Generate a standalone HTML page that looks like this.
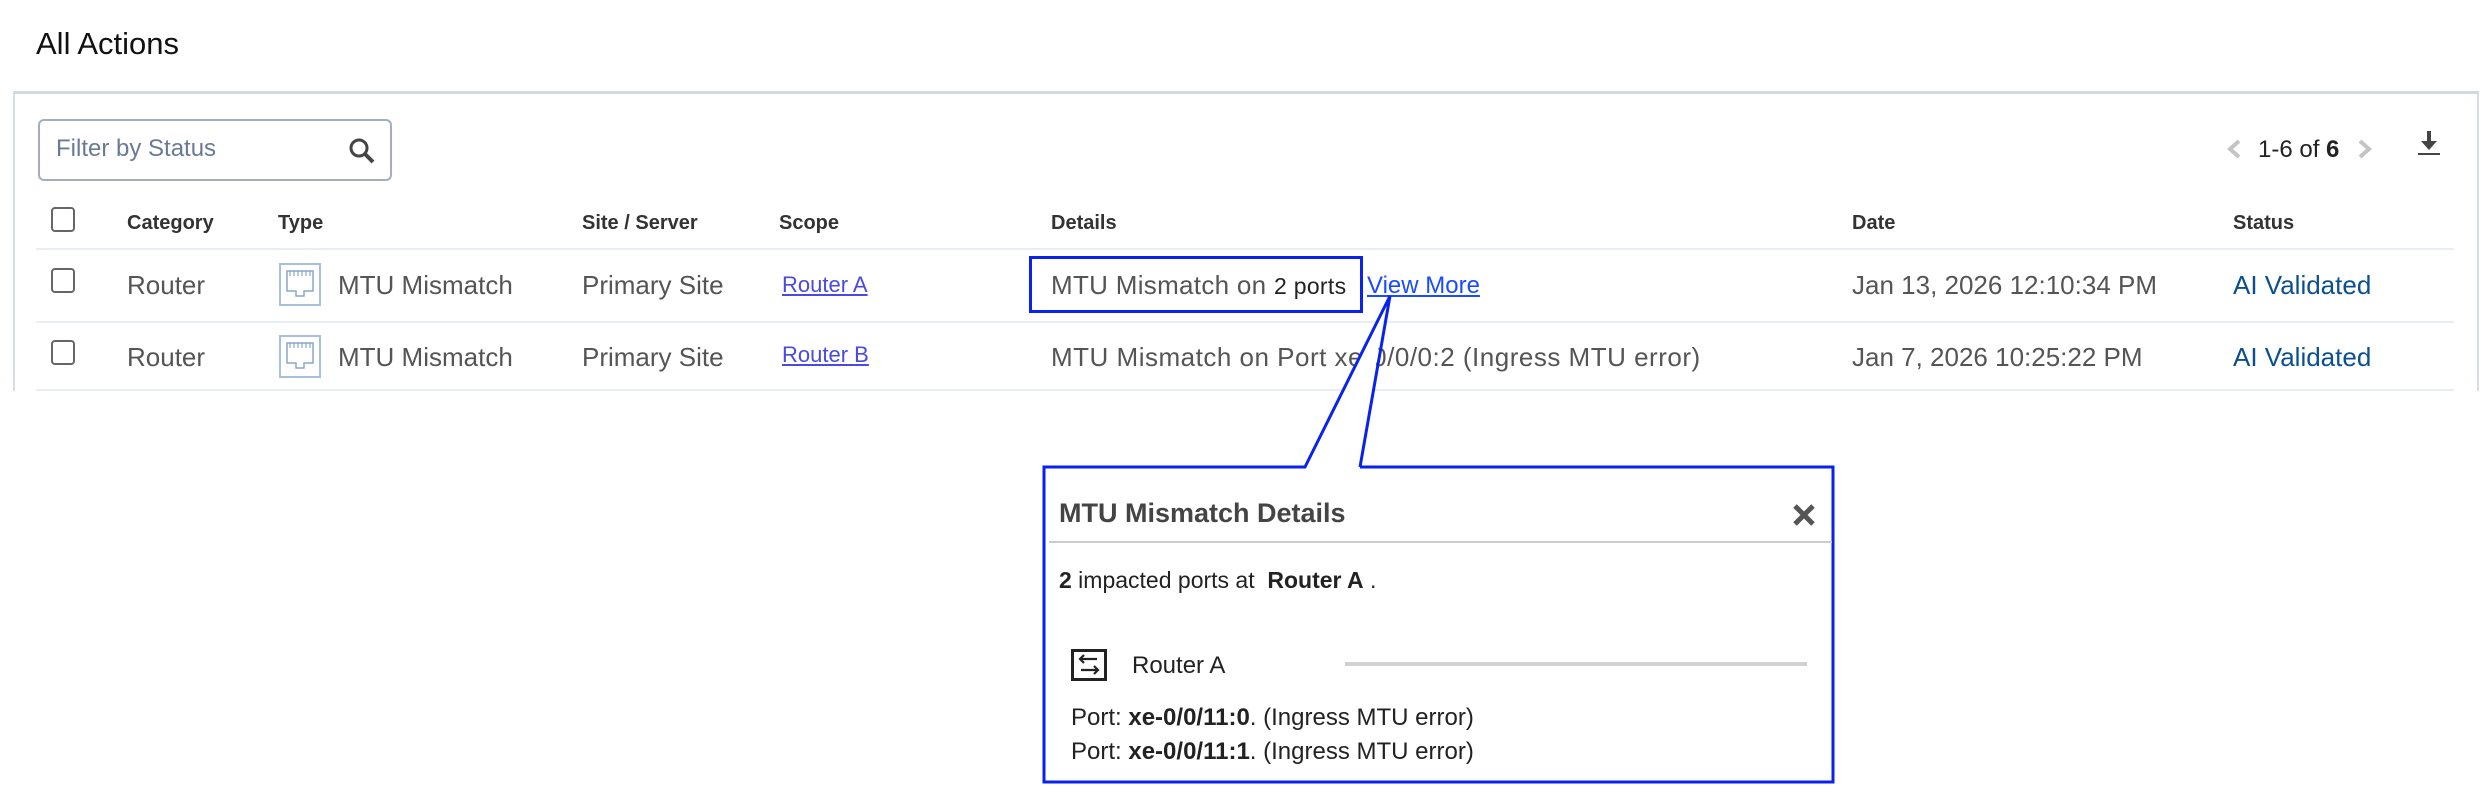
<!DOCTYPE html>
<html><head><meta charset="utf-8"><style>
*{margin:0;padding:0;box-sizing:border-box}
body{width:2488px;height:812px;background:#fff;position:relative;overflow:hidden;font-family:"Liberation Sans",sans-serif;color:#555}
.a{position:absolute;white-space:nowrap}
.h{font-weight:bold;font-size:20px;color:#333;top:212px}
.r{font-size:26px;line-height:30px}
.cb{position:absolute;width:24px;height:25px;border:2px solid #666;border-radius:4px;background:#fff}
.sep{position:absolute;left:36px;width:2418px;height:2px;background:#e8eef4}
.lnk{color:#4a4adf;text-decoration:underline;font-size:22px}
.ic{position:absolute;width:42px;height:43px;border:2px solid #a9c0dc;background:#fff}
.st{color:#0b4f8f;font-size:26px}
</style></head><body>
<div class="a" style="left:36px;top:26px;font-size:31px;color:#111">All Actions</div>
<div style="position:absolute;left:13px;top:91px;width:2466px;height:300px;border-top:3px solid #cfdbe4;border-left:2px solid #d6dee6;border-right:2px solid #d6dee6"></div>
<div style="position:absolute;left:38px;top:119px;width:354px;height:62px;border:2px solid #a3aec0;border-radius:6px"></div>
<div class="a" style="left:56px;top:135px;font-size:24px;color:#6a7a96">Filter by Status</div>
<svg class="a" style="left:348px;top:137px" width="28" height="28" viewBox="0 0 28 28"><circle cx="11" cy="11" r="8" fill="none" stroke="#444" stroke-width="3"/><line x1="17" y1="17" x2="25" y2="25" stroke="#444" stroke-width="4"/></svg>
<svg class="a" style="left:2226px;top:139px" width="16" height="20"><polyline points="13,2 4,10 13,18" fill="none" stroke="#c4c4c4" stroke-width="4"/></svg>
<div class="a" style="left:2258px;top:136px;font-size:24px;color:#222">1-6 of <b>6</b></div>
<svg class="a" style="left:2357px;top:139px" width="16" height="20"><polyline points="3,2 12,10 3,18" fill="none" stroke="#c4c4c4" stroke-width="4"/></svg>
<svg class="a" style="left:2416px;top:130px" width="26" height="26"><line x1="13" y1="1" x2="13" y2="14" stroke="#444" stroke-width="4"/><polygon points="5,11 21,11 13,20" fill="#444"/><line x1="2" y1="24" x2="24" y2="24" stroke="#444" stroke-width="2"/></svg>

<div class="cb" style="left:51px;top:207px"></div>
<div class="a h" style="left:127px">Category</div>
<div class="a h" style="left:278px">Type</div>
<div class="a h" style="left:582px">Site / Server</div>
<div class="a h" style="left:779px">Scope</div>
<div class="a h" style="left:1051px">Details</div>
<div class="a h" style="left:1852px">Date</div>
<div class="a h" style="left:2233px">Status</div>
<div class="sep" style="top:248px"></div>

<div class="cb" style="left:51px;top:268px"></div>
<div class="a r" style="left:127px;top:270px">Router</div>
<div class="ic" style="left:279px;top:263px"><svg width="38" height="39"><path d="M6 6H32V26H23V31H15V26H6Z" fill="none" stroke="#8aa6cc" stroke-width="1.5"/><path d="M9 6V11M13 6V11M17 6V11M21 6V11M25 6V11M29 6V11" stroke="#8aa6cc" stroke-width="1.2"/></svg></div>
<div class="a r" style="left:338px;top:270px">MTU Mismatch</div>
<div class="a r" style="left:582px;top:270px">Primary Site</div>
<div class="a lnk" style="left:782px;top:272px">Router A</div>
<div class="a r" style="left:1051px;top:270px;letter-spacing:0.3px">MTU Mismatch on <span style="font-size:23px;color:#222">2 ports</span></div>
<div class="a lnk" style="left:1367px;top:272px;color:#1a4cff;font-size:24px">View More</div>
<div class="a r" style="left:1852px;top:270px">Jan 13, 2026 12:10:34 PM</div>
<div class="a st" style="left:2233px;top:270px">AI Validated</div>
<div class="sep" style="top:321px"></div>

<div class="cb" style="left:51px;top:340px"></div>
<div class="a r" style="left:127px;top:342px">Router</div>
<div class="ic" style="left:279px;top:335px"><svg width="38" height="39"><path d="M6 6H32V26H23V31H15V26H6Z" fill="none" stroke="#8aa6cc" stroke-width="1.5"/><path d="M9 6V11M13 6V11M17 6V11M21 6V11M25 6V11M29 6V11" stroke="#8aa6cc" stroke-width="1.2"/></svg></div>
<div class="a r" style="left:338px;top:342px">MTU Mismatch</div>
<div class="a r" style="left:582px;top:342px">Primary Site</div>
<div class="a lnk" style="left:782px;top:342px">Router B</div>
<div class="a r" style="left:1051px;top:342px;letter-spacing:0.5px">MTU Mismatch on Port xe-0/0/0:2 (Ingress MTU error)</div>
<div class="a r" style="left:1852px;top:342px">Jan 7, 2026 10:25:22 PM</div>
<div class="a st" style="left:2233px;top:342px">AI Validated</div>
<div class="sep" style="top:389px"></div>

<div style="position:absolute;left:1029px;top:256px;width:334px;height:57px;border:3px solid #0a22ee"></div>

<div style="position:absolute;left:1044px;top:467px;width:789px;height:315px;background:#fff"></div>
<svg class="a" style="left:0;top:0" width="2488" height="812"><polygon points="1305,467 1386,300 1360,467" fill="#fff"/><polyline points="1360,467 1390,296 1305,467 1044,467 1044,782 1833,782 1833,467 1360,467" fill="none" stroke="#0a22ee" stroke-width="3"/></svg>
<div class="a" style="left:1059px;top:498px;font-size:27px;font-weight:bold;color:#444">MTU Mismatch Details</div>
<svg class="a" style="left:1792px;top:503px" width="24" height="24"><path d="M3 3L21 21M21 3L3 21" stroke="#555" stroke-width="5"/></svg>
<div class="a" style="left:1049px;top:541px;width:783px;height:2px;background:#ccc"></div>
<div class="a" style="left:1059px;top:567px;font-size:23px;color:#222"><b>2</b> impacted ports at&nbsp; <b>Router A</b> .</div>
<svg class="a" style="left:1071px;top:649px" width="36" height="32"><rect x="1.5" y="1.5" width="33" height="29" fill="none" stroke="#222" stroke-width="3"/><path d="M26 10H9M13 6L9 10L13 14M10 21H27M23 17L27 21L23 25" fill="none" stroke="#222" stroke-width="2.2"/></svg>
<div class="a" style="left:1132px;top:652px;font-size:24px;color:#222">Router A</div>
<div class="a" style="left:1345px;top:662px;width:462px;height:4px;background:#d2d2d2"></div>
<div class="a" style="left:1071px;top:704px;font-size:24px;color:#222">Port: <b>xe-0/0/11:0</b>. (Ingress MTU error)</div>
<div class="a" style="left:1071px;top:738px;font-size:24px;color:#222">Port: <b>xe-0/0/11:1</b>. (Ingress MTU error)</div>
</body></html>
